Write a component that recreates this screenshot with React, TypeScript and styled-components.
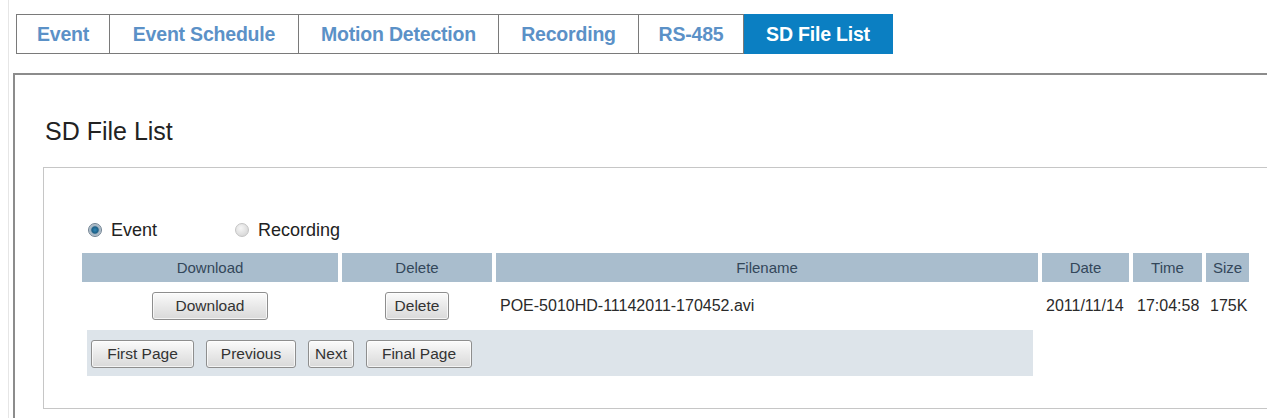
import React, { FC } from 'react';
import styled, { createGlobalStyle } from 'styled-components';

const GlobalStyle = createGlobalStyle`
  * {
    margin: 0;
    box-sizing: border-box;
  }
  body {
    background: #fff;
    font-family: "Liberation Sans", Arial, sans-serif;
  }
`;

const Page = styled.div`
  height: 418px;
  overflow: hidden;
  padding: 14px 6px 0 0;
  margin-left: 8px;
  border-left: 1px solid #e6e6e6;
  width: 1265px;
`;

// Tabs ===========================================================================================

const TabBar = styled.div`
  display: flex;
  height: 40px;
  margin-left: 7px;
`;

const Tab = styled.div<{ $active?: boolean; $first?: boolean; $w: number }>`
  width: ${(p) => p.$w}px;
  display: flex;
  align-items: center;
  justify-content: center;
  font-size: 19.5px;
  font-weight: bold;
  letter-spacing: -0.2px;
  color: ${(p) => (p.$active ? '#fff' : '#5b91c7')};
  background: ${(p) => (p.$active ? '#0b7fc2' : '#fff')};
  border-top: 1.5px solid ${(p) => (p.$active ? '#0b7fc2' : '#7a7a7a')};
  border-bottom: 1.5px solid ${(p) => (p.$active ? '#0b7fc2' : '#7a7a7a')};
  border-right: 1.5px solid ${(p) => (p.$active ? '#0b7fc2' : '#7a7a7a')};
  border-left: ${(p) => (p.$first ? '1.5px solid #7a7a7a' : 'none')};
`;

// Panel ==========================================================================================

const Panel = styled.div`
  margin: 19px 0 0 4px;
  border-top: 2px solid #8c8c8c;
  border-left: 2px solid #8c8c8c;
  height: 360px;
`;

const Heading = styled.h2`
  font-size: 25px;
  line-height: 25px;
  font-weight: normal;
  color: #222;
  margin: 44px 0 0 30px;
`;

const Box = styled.div`
  margin: 23px 0 0 28px;
  border: 1px solid #c6c6c6;
  border-right: none;
  padding: 52px 0 32px 38px;
`;

const RadioRow = styled.div`
  display: flex;
  align-items: center;
  height: 20px;
  padding-left: 6px;
  margin-bottom: 13px;
`;

const RadioLabel = styled.label`
  display: flex;
  align-items: center;
  font-size: 18px;
  color: #222;
  margin-right: 78px;
`;

const RadioDot = styled.span<{ $checked?: boolean }>`
  flex-shrink: 0;
  width: 14px;
  height: 14px;
  border-radius: 50%;
  margin-right: 9px;
  border: 1px solid ${(p) => (p.$checked ? '#6f8191' : '#c4c4c4')};
  background: ${(p) =>
    p.$checked
      ? 'radial-gradient(circle, #2f86b4 0, #1d5f86 3.2px, #9fb1bf 4.2px, #dfe6ec 100%)'
      : 'radial-gradient(circle at 40% 35%, #f6f6f6, #cfcfcf)'};
`;

// Table ==========================================================================================

const Grid = styled.div`
  display: grid;
  grid-template-columns: 256px 150px 542px 87px 69px 43px;
  column-gap: 4px;
`;

const HeadCell = styled.div`
  height: 29px;
  background: #a9bdcd;
  color: #33475a;
  font-size: 15px;
  display: flex;
  align-items: center;
  justify-content: center;
`;

const Cell = styled.div<{ $center?: boolean }>`
  height: 47px;
  display: flex;
  align-items: center;
  justify-content: ${(p) => (p.$center ? 'center' : 'flex-start')};
  padding-left: ${(p) => (p.$center ? '0' : '4px')};
  font-size: 16px;
  color: #2a2a2a;
  white-space: nowrap;
`;

const Button = styled.button<{ $w: number }>`
  width: ${(p) => p.$w}px;
  height: 28px;
  padding: 0;
  font-family: "Liberation Sans", Arial, sans-serif;
  font-size: 15.5px;
  color: #333;
  background: linear-gradient(#fbfbfb, #e9e9e9 50%, #d9d9d9);
  border: 1px solid #8e8e8e;
  border-radius: 3px;
  box-shadow: inset 0 0 0 1px rgba(255, 255, 255, 0.7);
`;

const PagerBar = styled.div`
  grid-column: 1 / 4;
  margin: 1px 5px 0 5px;
  height: 46px;
  background: #dde4ea;
  display: flex;
  align-items: flex-start;
  gap: 12px;
  padding: 10px 0 0 4px;
`;

const tabs: [string, number][] = [
  ['Event', 94],
  ['Event Schedule', 189],
  ['Motion Detection', 200],
  ['Recording', 140],
  ['RS-485', 105],
  ['SD File List', 149],
];

const App: FC = () => (
  <>
    <GlobalStyle />
    <Page>
      <TabBar>
        {tabs.map(([t, w], i) => (
          <Tab key={t} $w={w} $first={i === 0} $active={t === 'SD File List'}>
            {t}
          </Tab>
        ))}
      </TabBar>
      <Panel>
        <Heading>SD File List</Heading>
        <Box>
          <RadioRow>
            <RadioLabel>
              <RadioDot $checked />
              Event
            </RadioLabel>
            <RadioLabel>
              <RadioDot />
              Recording
            </RadioLabel>
          </RadioRow>
          <Grid>
            <HeadCell>Download</HeadCell>
            <HeadCell>Delete</HeadCell>
            <HeadCell>Filename</HeadCell>
            <HeadCell>Date</HeadCell>
            <HeadCell>Time</HeadCell>
            <HeadCell>Size</HeadCell>

            <Cell $center>
              <Button $w={116}>Download</Button>
            </Cell>
            <Cell $center>
              <Button $w={64}>Delete</Button>
            </Cell>
            <Cell>POE-5010HD-11142011-170452.avi</Cell>
            <Cell>2011/11/14</Cell>
            <Cell>17:04:58</Cell>
            <Cell>175K</Cell>

            <PagerBar>
              <Button $w={103}>First Page</Button>
              <Button $w={90}>Previous</Button>
              <Button $w={46}>Next</Button>
              <Button $w={106}>Final Page</Button>
            </PagerBar>
          </Grid>
        </Box>
      </Panel>
    </Page>
  </>
);

export default App;
